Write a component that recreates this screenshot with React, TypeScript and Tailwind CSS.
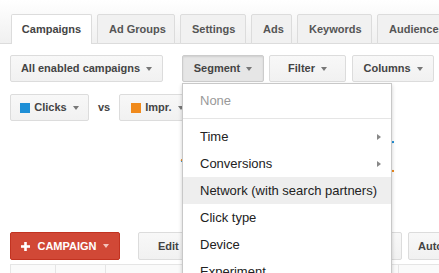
import React from 'react';

const tabs = [
  { label: 'Campaigns', w: 'w-[81px]' },
  { label: 'Ad Groups', w: 'w-[78px]' },
  { label: 'Settings', w: 'w-[66px]' },
  { label: 'Ads', w: 'w-[41px]' },
  { label: 'Keywords', w: 'w-[75px]' },
  { label: 'Audiences', w: 'w-[80px]' },
];

const Caret: React.FC<{ className?: string }> = ({ className = 'border-t-[#777]' }) => (
  <span className={`ml-[6px] inline-block h-0 w-0 border-x-[3.5px] border-t-[4px] border-x-transparent ${className}`} />
);

const Btn: React.FC<{ w: string; pressed?: boolean; children?: React.ReactNode; className?: string }> = ({
  w,
  pressed,
  children,
  className = '',
}) => (
  <div
    className={`flex h-[27px] shrink-0 items-center justify-center whitespace-nowrap rounded-[2px] border text-[11px] font-bold text-[#444] ${w} ${
      pressed
        ? 'border-[#ccc] bg-[#e6e6e6] shadow-[inset_0_1px_2px_rgba(0,0,0,0.1)]'
        : 'border-[#dcdcdc] bg-linear-to-b from-[#f8f8f8] to-[#f1f1f1]'
    } ${className}`}
  >
    {children}
  </div>
);

const menu = [
  { label: 'Time', sub: true },
  { label: 'Conversions', sub: true },
  { label: 'Network (with search partners)', active: true },
  { label: 'Click type' },
  { label: 'Device' },
  { label: 'Experiment' },
];

const App: React.FC = () => {
  return (
    <div className="relative h-[273px] w-[439px] overflow-hidden bg-white font-['Liberation_Sans',Arial,sans-serif]">
      {/* Tabs */}
      <nav className="flex h-[44px] items-end gap-[5px] border-b border-[#dcdcdc] bg-linear-to-b from-white to-[#f0f0f0] pl-[11px]">
        {tabs.map((t, i) => (
          <div
            key={t.label}
            className={`-mb-px flex h-[30px] shrink-0 items-center justify-center whitespace-nowrap rounded-t-[2px] border text-[11px] font-bold ${t.w} ${
              i === 0
                ? 'border-b-0 border-[#dcdcdc] bg-white text-[#444]'
                : 'justify-start pl-[11px] border-[#dcdcdc] bg-[#f1f1f1] text-[#555]'
            }`}
          >
            {t.label}
          </div>
        ))}
      </nav>

      {/* Toolbar */}
      <div className="flex items-center pl-[10px] pt-[11px]">
        <Btn w="w-[153px]">
          All enabled campaigns
          <Caret />
        </Btn>
        <Btn w="w-[82px]" pressed className="ml-[19px]">
          Segment
          <Caret />
        </Btn>
        <Btn w="w-[77px]" className="ml-[5px]">
          Filter
          <Caret />
        </Btn>
        <Btn w="w-[82px]" className="ml-[6px]">
          Columns
          <Caret />
        </Btn>
      </div>

      {/* Metric selectors */}
      <div className="mt-[12px] flex items-center pl-[10px]">
        <Btn w="w-[79px]">
          <span className="mr-[4px] h-[10px] w-[10px] bg-[#1e8fd6]" />
          Clicks
          <Caret />
        </Btn>
        <span className="mx-[9px] text-[11px] font-bold text-[#444]">vs</span>
        <Btn w="w-[76px]" className="justify-start pl-[11px]">
          <span className="mr-[4px] h-[10px] w-[10px] bg-[#f08a1c]" />
          Impr.
          <Caret />
        </Btn>
      </div>

      {/* Chart (mostly hidden behind the menu) */}
      <div className="h-[111px]">
        <svg width="439" height="111" className="block">
          <polyline points="181,40 260,30 330,25 394,21" fill="none" stroke="#1e8fd6" strokeWidth="2" />
          <polyline points="181,39 260,55 330,48 394,50" fill="none" stroke="#f08a1c" strokeWidth="2" />
        </svg>
      </div>

      {/* Bottom toolbar */}
      <div className="flex items-center pl-[10px]">
        <div className="flex h-[28px] w-[110px] shrink-0 items-center justify-center rounded-[2px] border border-[#c23321] bg-[#d14836] text-[11px] font-bold text-white">
          <svg width="9" height="9" viewBox="0 0 9 9" className="mr-[7px]">
            <rect x="3.2" y="0" width="2.6" height="9" fill="white" />
            <rect x="0" y="3.2" width="9" height="2.6" fill="white" />
          </svg>
          CAMPAIGN
          <Caret className="border-t-[#f4c3bb]" />
        </div>
        <Btn w="w-[60px]" className="ml-[18px] h-[28px] justify-start pl-[19px]">
          Edit
        </Btn>
        <Btn w="w-[60px]" className="ml-[144px] h-[28px] justify-start pl-[6px]">
          Labels
        </Btn>
        <Btn w="w-[60px]" className="ml-[6px] h-[28px] justify-start pl-[9px]">
          Automate
        </Btn>
      </div>

      {/* Table header */}
      <div className="mt-[4px] ml-[10px] flex h-[12px] border-t border-[#e5e5e5] bg-[#fafafa]">
        <div className="w-[45px] border-l border-[#e5e5e5]" />
        <div className="w-[50px] border-l border-[#e5e5e5]" />
        <div className="w-[293px] border-l border-[#e5e5e5]" />
        <div className="flex-1 border-l border-[#e5e5e5]" />
      </div>

      {/* Segment dropdown */}
      <div className="absolute left-[182px] top-[83px] w-[210px] border border-[#c8c8c8] bg-white pt-[3px] shadow-[0_2px_4px_rgba(0,0,0,0.2)]">
        <div className="flex h-[27px] items-center pl-[17px] text-[13px] text-[#999]">None</div>
        <div className="my-[4px] border-t border-[#e5e5e5]" />
        {menu.map((m) => (
          <div
            key={m.label}
            className={`flex h-[27px] items-center justify-between pl-[17px] pr-[10px] text-[13px] text-[#222] ${
              m.active ? 'bg-[#eee]' : ''
            }`}
          >
            {m.label}
            {m.sub && (
              <span className="h-0 w-0 border-y-[3.5px] border-l-[4px] border-y-transparent border-l-[#888]" />
            )}
          </div>
        ))}
      </div>
    </div>
  );
};

export default App;
